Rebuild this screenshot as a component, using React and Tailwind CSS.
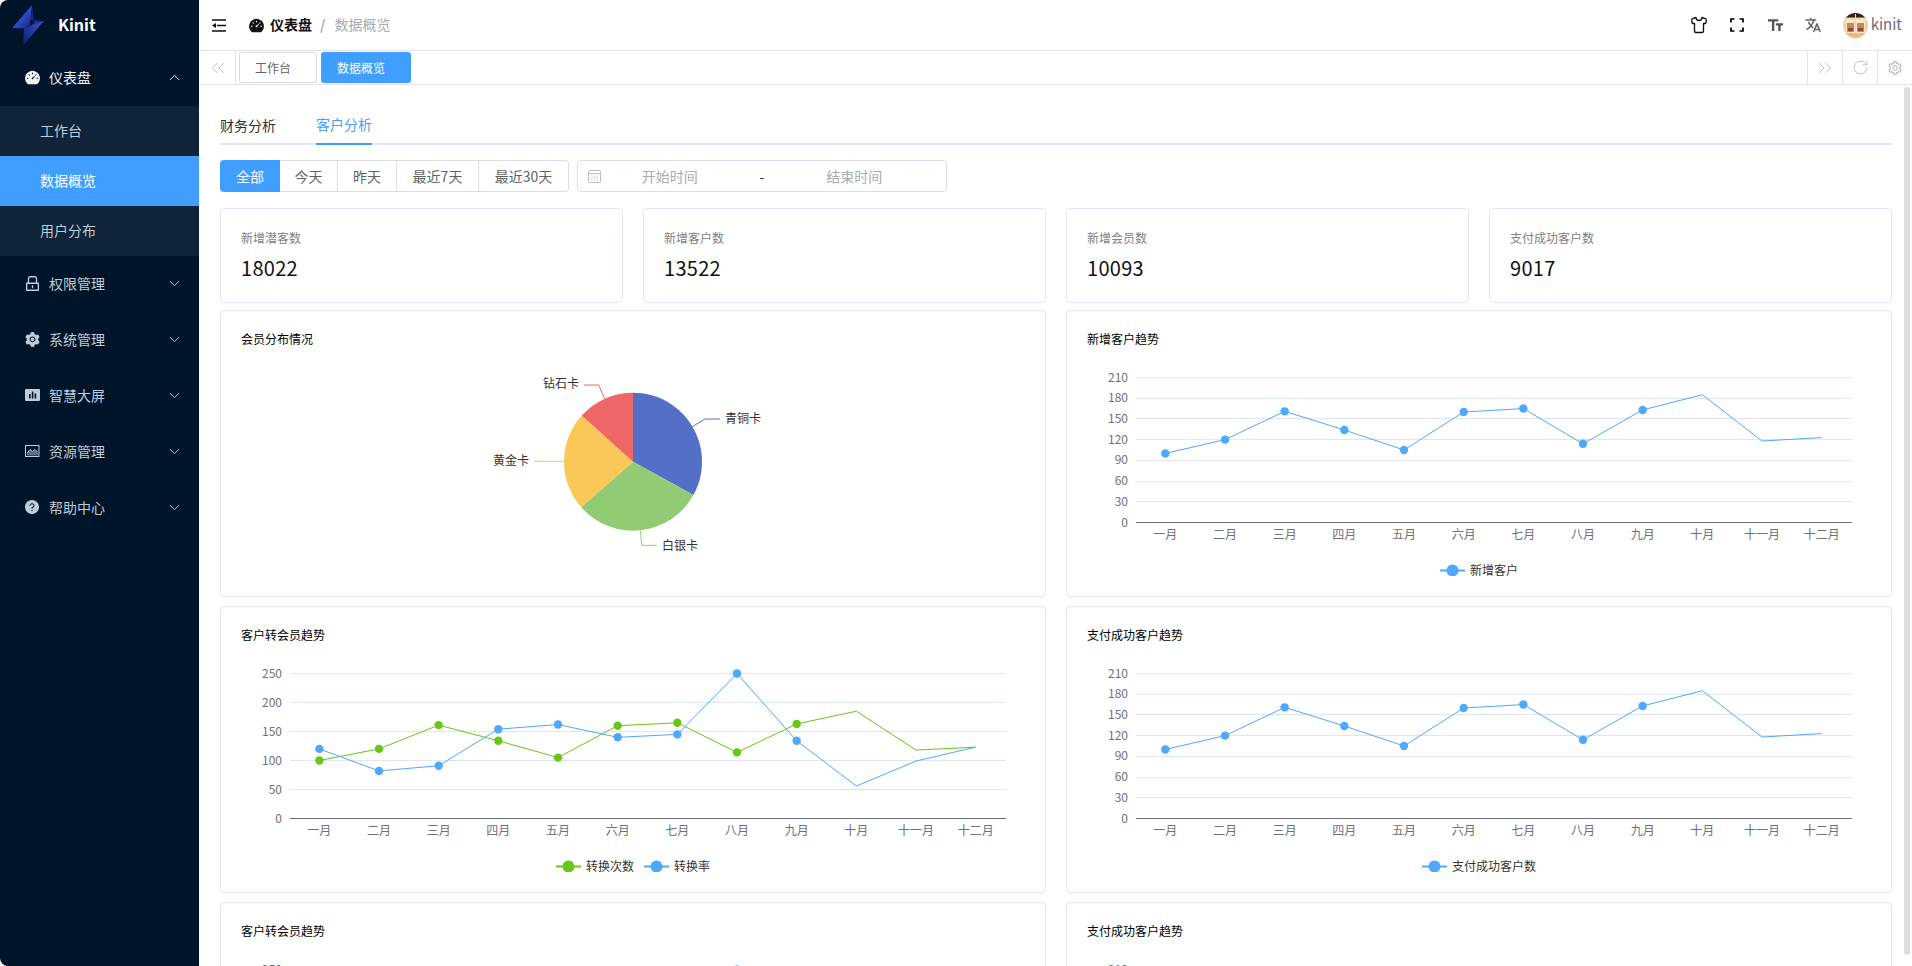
import React from "react";
import { AiFillDashboard, AiOutlineLock, AiFillSetting, AiFillQuestionCircle, AiOutlineSetting } from "react-icons/ai";
import { MdTextFields } from "react-icons/md";
import { IoLanguage } from "react-icons/io5";
import { ChevronDown, ChevronUp, ChevronsLeft, ChevronsRight, RotateCw, Shirt } from "lucide-react";

const months = ["一月", "二月", "三月", "四月", "五月", "六月", "七月", "八月", "九月", "十月", "十一月", "十二月"];
const customers = [100, 120, 161, 134, 105, 160, 165, 114, 163, 185, 118, 123];
const rates = [120, 82, 91, 154, 162, 140, 145, 250, 134, 56, 99, 123];

const BLUE = "#4ea8fd";
const GREEN = "#69c614";

const GRID_LEFT = 48.5;
const GRID_RIGHT = 764.5;
const GRID_TOP = 28.5;
const GRID_BOTTOM = 173.5;

function BarsIcon() {
	return (
		<svg width="15" height="12" viewBox="0 0 15 12" className="shrink-0">
			<rect width="15" height="12" rx="1" fill="#bfcbd9" />
			<rect x="4" y="5" width="1.6" height="4.5" fill="#001529" />
			<rect x="6.8" y="2.5" width="1.6" height="7" fill="#001529" />
			<rect x="9.6" y="4.5" width="1.6" height="5" fill="#001529" />
		</svg>
	);
}

function PictureIcon() {
	return (
		<svg width="15" height="12" viewBox="0 0 15 12" fill="none" className="shrink-0">
			<rect x="0.5" y="0.5" width="13.5" height="11" stroke="#bfcbd9" />
			<path d="M2 9l3-4 2.500 2L10 5l3 3v2.500H2z" fill="#5d6f83" />
			<path d="M2 8.500l3-4 2.500 2L10 4.500l3 3" stroke="#bfcbd9" />
		</svg>
	);
}

const menus = [
	{ name: "权限管理", icon: <AiOutlineLock size={19} className="shrink-0" /> },
	{ name: "系统管理", icon: <AiFillSetting size={17} className="shrink-0" /> },
	{ name: "智慧大屏", icon: <BarsIcon /> },
	{ name: "资源管理", icon: <PictureIcon /> },
	{ name: "帮助中心", icon: <AiFillQuestionCircle size={16} className="shrink-0" /> },
];

function Logo() {
	return (
		<svg width="34" height="42" viewBox="0 0 34 42" className="ml-[11px]">
			<defs>
				<linearGradient id="boltTop" x1="0" y1="0" x2="1" y2="1">
					<stop offset="0" stopColor="#3a52c8" />
					<stop offset="0.6" stopColor="#2f45bb" />
					<stop offset="1" stopColor="#101f78" />
				</linearGradient>
				<linearGradient id="boltBottom" x1="1" y1="0" x2="0" y2="1">
					<stop offset="0" stopColor="#3a52c8" />
					<stop offset="1" stopColor="#0f1d70" />
				</linearGradient>
			</defs>
			<path d="M21 1L1 24l12 .5L19 21z" fill="url(#boltTop)" />
			<path d="M21 1l-1 15 13 1-10 6z" fill="#1b2c96" />
			<path d="M33 17L12 41.500l1-17 9-4z" fill="url(#boltBottom)" />
		</svg>
	);
}

function Avatar() {
	return (
		<svg width="25" height="25" viewBox="0 0 25 25">
			<defs>
				<clipPath id="avatarClip">
					<circle cx="12.5" cy="12.5" r="12.5" />
				</clipPath>
			</defs>
			<g clipPath="url(#avatarClip)">
				<rect width="25" height="25" fill="#f8cf9f" />
				<rect width="25" height="4.500" fill="#3b2219" />
				<rect x="3" y="6" width="9" height="14" rx="1" fill="#f6e6d2" />
				<rect x="13" y="6" width="9" height="14" rx="1" fill="#f6e6d2" />
				<rect x="4" y="10" width="7" height="9" fill="#c98a52" />
				<rect x="14" y="10" width="7" height="9" fill="#c98a52" />
				<rect x="5" y="15" width="5" height="3" fill="#8a5128" />
				<rect x="15" y="15" width="5" height="3" fill="#8a5128" />
				<rect x="12" y="1" width="1" height="6" fill="#e8d8c4" />
				<rect y="20" width="25" height="5" fill="#f6b675" />
			</g>
		</svg>
	);
}

function Chart({ series, max, step, legend }) {
	const toY = (v) => GRID_BOTTOM - (v / max) * (GRID_BOTTOM - GRID_TOP);
	const cw = (GRID_RIGHT - GRID_LEFT) / 12;
	const toX = (i) => GRID_LEFT + (i + 0.5) * cw;
	const ticks = [];
	for (let v = 0; v <= max; v += step) ticks.push(v);

	const total = legend.reduce((sum, l) => sum + 30 + l.name.length * 12, 0) + (legend.length - 1) * 10;
	let cursor = 392 - total / 2;

	return (
		<svg width="784" height="227" viewBox="0 0 784 227" className="block">
			{ticks.map((v) => (
				<g key={v}>
					{v > 0 && (
						<line x1={GRID_LEFT} x2={GRID_RIGHT} y1={toY(v)} y2={toY(v)} stroke="#e0e6f1" shapeRendering="crispEdges" />
					)}
					<text x="41" y={toY(v) - 1.5} textAnchor="end" dominantBaseline="central" fontSize="12" fill="#6e7079">
						{v}
					</text>
				</g>
			))}
			<line x1={GRID_LEFT} x2={GRID_RIGHT} y1={GRID_BOTTOM} y2={GRID_BOTTOM} stroke="#6e7079" shapeRendering="crispEdges" />
			{months.map((m, i) => (
				<text key={m} x={toX(i)} y="184.5" textAnchor="middle" dominantBaseline="central" fontSize="12" fill="#6e7079">
					{m}
				</text>
			))}
			{series.map((s) => (
				<g key={s.color}>
					<polyline
						points={s.data.map((v, i) => `${toX(i)},${toY(v)}`).join(" ")}
						fill="none"
						stroke={s.color}
						strokeWidth="1"
					/>
					{s.data.slice(0, 9).map((v, i) => (
						<circle key={i} cx={toX(i)} cy={toY(v)} r="4.2" fill={s.color} />
					))}
				</g>
			))}
			{legend.map((l) => {
				const x = cursor;
				cursor += 30 + l.name.length * 12 + 10;
				return (
					<g key={l.name}>
						<line x1={x} x2={x + 25} y1="221.5" y2="221.5" stroke={l.color} strokeWidth="2" />
						<circle cx={x + 12.5} cy="221.5" r="6" fill={l.color} />
						<text x={x + 30} y="220" dominantBaseline="central" fontSize="12" fill="#333">
							{l.name}
						</text>
					</g>
				);
			})}
		</svg>
	);
}

function polar(deg, r = 69) {
	const a = ((deg - 90) * Math.PI) / 180;
	return [392 + r * Math.cos(a), 112.7 + r * Math.sin(a)];
}

function sector(from, to) {
	const [x1, y1] = polar(from);
	const [x2, y2] = polar(to);
	return `M392 112.7L${x1} ${y1}A69 69 0 ${to - from > 180 ? 1 : 0} 1 ${x2} ${y2}Z`;
}

function PieChart() {
	return (
		<svg width="784" height="227" viewBox="0 0 784 227" className="block">
			<path d={sector(0, 118.9)} fill="#5470c6" />
			<path d={sector(118.9, 228.7)} fill="#91cc75" />
			<path d={sector(228.7, 312)} fill="#fac858" />
			<path d={sector(312, 360)} fill="#ee6666" />
			<polyline points="451.3,77.7 464,70 479,70" fill="none" stroke="#5470c6" />
			<polyline points="399.3,181.7 400.7,196.3 415.7,196.3" fill="none" stroke="#91cc75" />
			<polyline points="323,112.3 293,112.3" fill="none" stroke="#fac858" />
			<polyline points="363.7,49.7 357.7,36 343,36" fill="none" stroke="#ee6666" />
			<text x="484" y="68" dominantBaseline="central" fontSize="12" fill="#333">青铜卡</text>
			<text x="421" y="195" dominantBaseline="central" fontSize="12" fill="#333">白银卡</text>
			<text x="252" y="110" dominantBaseline="central" fontSize="12" fill="#333">黄金卡</text>
			<text x="302" y="33.5" dominantBaseline="central" fontSize="12" fill="#333">钻石卡</text>
		</svg>
	);
}

function ChartCard({ title, children }) {
	return (
		<div className="h-[287px] rounded-[4px] border border-[#e4e7ed] bg-white p-5">
			<div className="h-[18px] text-[12px] leading-[16px] text-[#000]">{title}</div>
			{children}
		</div>
	);
}

function StatCard({ label, value }) {
	return (
		<div className="h-[95px] rounded-[4px] border border-[#e4e7ed] bg-white p-5">
			<div className="text-[12px] leading-[18px] text-[#808080]">{label}</div>
			<div className="mt-[7px] text-[20px] leading-[28px] tracking-[0.3px] text-[#111]">{value}</div>
		</div>
	);
}

const customerChart = (
	<Chart
		max={210}
		step={30}
		series={[{ data: customers, color: BLUE }]}
		legend={[{ name: "新增客户", color: BLUE }]}
	/>
);
const payChart = (
	<Chart
		max={210}
		step={30}
		series={[{ data: customers, color: BLUE }]}
		legend={[{ name: "支付成功客户数", color: BLUE }]}
	/>
);
const convertChart = (
	<Chart
		max={250}
		step={50}
		series={[
			{ data: customers, color: GREEN },
			{ data: rates, color: BLUE },
		]}
		legend={[
			{ name: "转换次数", color: GREEN },
			{ name: "转换率", color: BLUE },
		]}
	/>
);

const ranges = [
	{ name: "全部", width: "w-[60px]" },
	{ name: "今天", width: "w-[58px]" },
	{ name: "昨天", width: "w-[59px]" },
	{ name: "最近7天", width: "w-[82px]" },
	{ name: "最近30天", width: "w-[90px]" },
];

export default function App() {
	return (
		<div className="h-[966px] w-[1912px] overflow-hidden rounded-[8px] bg-white font-['Noto_Sans_CJK_SC','Noto_Sans',sans-serif]">
			<div className="flex h-full">
				{/* 侧边栏 */}
				<aside className="w-[199px] shrink-0 bg-[#001529] text-[14px] text-[#bfcbd9]">
					<div className="flex h-[50px] items-center">
						<Logo />
						<span className="ml-[13px] pb-[2px] text-[16px] font-bold text-white">Kinit</span>
					</div>
					<div className="flex h-[56px] items-center pb-[2px] pl-[25px] pr-[16px] text-[#eef2f7]">
						<span className="flex w-[14px] justify-center">
							<AiFillDashboard size={17} className="shrink-0" />
						</span>
						<span className="ml-[10px]">仪表盘</span>
						<ChevronUp size={17} strokeWidth={1.4} className="ml-auto" />
					</div>
					<div className="bg-[#0f2438]">
						<div className="flex h-[50px] items-center pb-[2px] pl-[40px]">工作台</div>
						<div className="flex h-[50px] items-center bg-[#409eff] pb-[2px] pl-[40px] text-white">数据概览</div>
						<div className="flex h-[50px] items-center pb-[2px] pl-[40px]">用户分布</div>
					</div>
					{menus.map((item) => (
						<div key={item.name} className="flex h-[56px] items-center pb-[2px] pl-[25px] pr-[16px]">
							<span className="flex w-[14px] justify-center">{item.icon}</span>
							<span className="ml-[10px]">{item.name}</span>
							<ChevronDown size={17} strokeWidth={1.4} className="ml-auto" />
						</div>
					))}
				</aside>

				<div className="flex min-w-0 flex-1 flex-col">
					{/* 顶部 */}
					<header className="flex h-[51px] shrink-0 items-center border-b border-[#e2e4ea] pl-[13px] pr-[10px] text-[14px]">
						<svg width="14" height="13" viewBox="0 0 14 13">
							<path d="M0 1h14M5 6.500h9M0 12h14" stroke="#111" strokeWidth="1.4" />
							<path d="M0 6.500L4 4v5z" fill="#111" />
						</svg>
						<AiFillDashboard size={17} className="ml-[22px] text-[#111]" />
						<span className="ml-[5px] pb-[2px] font-bold text-[#111]">仪表盘</span>
						<span className="ml-[8px] pb-[2px] font-bold text-[#a8abb2]">/</span>
						<span className="ml-[9px] pb-[2px] text-[#a8abb2]">数据概览</span>
						<Shirt size={18} strokeWidth={1.8} className="ml-auto text-[#111]" />
						<svg width="14" height="14" viewBox="0 0 14 14" className="ml-[22px]">
							<path d="M1 4.500V1h3.500M9.500 1H13v3.500M13 9.500V13H9.500M4.500 13H1V9.500" fill="none" stroke="#000" strokeWidth="1.7" />
						</svg>
						<MdTextFields size={19} className="ml-[22px] text-[#555]" />
						<IoLanguage size={18} className="ml-[19px] text-[#666]" />
						<span className="ml-[21px]">
							<Avatar />
						</span>
						<span className="ml-[3px] pb-[2px] text-[15px] text-[#6b6d75]">kinit</span>
					</header>

					{/* 标签栏 */}
					<div className="flex h-[34px] shrink-0 items-center border-b border-[#e2e4ea] text-[12px]">
						<div className="flex h-full w-[37px] items-center justify-center border-r border-[#e2e4ea] pl-[2px] text-[#b4b7be]">
							<ChevronsLeft size={22} strokeWidth={1} />
						</div>
						<div className="ml-[3px] flex h-[31px] w-[78px] items-center justify-center rounded-[3px] border border-[#d9d9d9] pr-[10px] text-[#606266]">
							工作台
						</div>
						<div className="ml-[4px] flex h-[31px] w-[90px] items-center justify-center rounded-[3px] bg-[#409eff] pr-[10px] text-white">
							数据概览
						</div>
						<div className="ml-auto flex h-full text-[#b4b7be]">
							<div className="flex w-[35px] items-center justify-center border-l border-[#e2e4ea]">
								<ChevronsRight size={22} strokeWidth={1} />
							</div>
							<div className="flex w-[35px] items-center justify-center border-l border-[#e2e4ea]">
								<RotateCw size={17} strokeWidth={1.2} />
							</div>
							<div className="flex w-[35px] items-center justify-center border-l border-[#e2e4ea]">
								<AiOutlineSetting size={16} />
							</div>
						</div>
					</div>

					{/* 内容 */}
					<main className="relative min-h-0 flex-1 overflow-hidden pl-[21px] pr-[20px] pt-[21px]">
						<div className="absolute right-[2px] top-[2px] h-[868px] w-[6px] rounded-full bg-[#dddee0]" />

						<div className="flex h-[39px] gap-[40px] border-b-2 border-[#e4e7ed] text-[14px]">
							<div className="flex h-[39px] items-center text-[#303133]">财务分析</div>
							<div className="flex h-[39px] items-center border-b-2 border-[#409eff] text-[#409eff]">客户分析</div>
						</div>

						<div className="mt-[15px] flex h-[32px] text-[14px] leading-none">
							<div className="flex">
								{ranges.map((r, i) => (
									<div
										key={r.name}
										className={
											i === 0
												? "flex w-[60px] items-center justify-center rounded-l-[4px] bg-[#409eff] text-white"
												: `flex ${r.width} items-center justify-center border-y border-r border-[#dcdfe6] text-[#606266] ${i === 4 ? "rounded-r-[4px]" : ""}`
										}
									>
										{r.name}
									</div>
								))}
							</div>
							<div className="ml-[8px] flex w-[370px] items-center rounded-[4px] border border-[#dcdfe6] pl-[10px] pr-[24px] text-[#a8abb2]">
								<svg width="13" height="14" viewBox="0 0 13 14" fill="none">
									<rect x="0.5" y="1.500" width="12" height="12" rx="1" stroke="#b8bbc2" />
									<path d="M1 4.500h11" stroke="#b8bbc2" />
									<path d="M3 7h7M3 9h7M3 11h7" stroke="#c8cbd1" strokeDasharray="1.500 1.200" />
								</svg>
								<span className="ml-[1px] flex-1 text-center">开始时间</span>
								<span className="w-[49px] text-center text-[#303133]">-</span>
								<span className="flex-1 text-center">结束时间</span>
							</div>
						</div>

						<div className="mt-[16px] grid grid-cols-4 gap-[20px]">
							<StatCard label="新增潜客数" value="18022" />
							<StatCard label="新增客户数" value="13522" />
							<StatCard label="新增会员数" value="10093" />
							<StatCard label="支付成功客户数" value="9017" />
						</div>

						<div className="mt-[7px] grid grid-cols-2 gap-x-[20px] gap-y-[9px]">
							<ChartCard title="会员分布情况">
								<PieChart />
							</ChartCard>
							<ChartCard title="新增客户趋势">{customerChart}</ChartCard>
							<ChartCard title="客户转会员趋势">{convertChart}</ChartCard>
							<ChartCard title="支付成功客户趋势">{payChart}</ChartCard>
							<ChartCard title="客户转会员趋势">{convertChart}</ChartCard>
							<ChartCard title="支付成功客户趋势">{payChart}</ChartCard>
						</div>
					</main>
				</div>
			</div>
		</div>
	);
}
